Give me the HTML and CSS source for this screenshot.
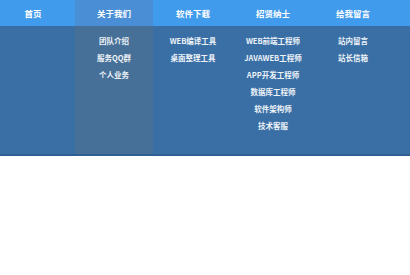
FILE: index.html
```html
<!DOCTYPE html>
<html lang="zh-CN">
<head>
<meta charset="utf-8">
<title>导航</title>
<link rel="stylesheet" href="styles.css">
</head>
<body>
<nav class="nav">
  <div class="col col-first">
    <div class="head">首页</div>
    <ul class="sub"></ul>
  </div>
  <div class="col col-w78 active">
    <div class="head">关于我们</div>
    <ul class="sub">
      <li>团队介绍</li>
      <li>服务QQ群</li>
      <li>个人业务</li>
    </ul>
  </div>
  <div class="col">
    <div class="head">软件下载</div>
    <ul class="sub">
      <li>WEB编译工具</li>
      <li>桌面整理工具</li>
    </ul>
  </div>
  <div class="col">
    <div class="head">招贤纳士</div>
    <ul class="sub">
      <li>WEB前端工程师</li>
      <li>JAVAWEB工程师</li>
      <li>APP开发工程师</li>
      <li>数据库工程师</li>
      <li>软件架构师</li>
      <li>技术客服</li>
    </ul>
  </div>
  <div class="col">
    <div class="head">给我留言</div>
    <ul class="sub">
      <li>站内留言</li>
      <li>站长信箱</li>
    </ul>
  </div>
  <div class="col filler">
    <div class="head"></div>
  </div>
</nav>
</body>
</html>
```
FILE: styles.css
```css
html, body {
  margin: 0;
  padding: 0;
  background: #ffffff;
}

body {
  font-family: "Noto Sans CJK SC", "Noto Sans", "Liberation Sans", sans-serif;
  font-weight: bold;
  color: #ffffff;
}

.nav {
  display: flex;
  align-items: stretch;
  background: #3a6fa6;
  border-bottom: 2px solid #2f5f93;
  height: 154px;
}

.col {
  width: 80px;
  display: flex;
  flex-direction: column;
}

.col-first {
  width: 75px;
}

.col-first .head {
  padding-right: 9px;
}

.col-w78 {
  width: 78px;
}

.filler {
  flex: 1;
}

.head {
  height: 26px;
  line-height: 26px;
  background: #419bec;
  text-align: center;
  font-size: 8.5px;
  box-sizing: border-box;
}

.sub {
  list-style: none;
  margin: 0;
  padding: 6px 0 0;
  flex: 1;
}

.sub li {
  height: 17px;
  line-height: 17px;
  text-align: center;
  font-size: 7.5px;
  color: #eef3f8;
}

.active {
  background: #467097;
}

.active .head {
  background: #4a8fd6;
}
```
